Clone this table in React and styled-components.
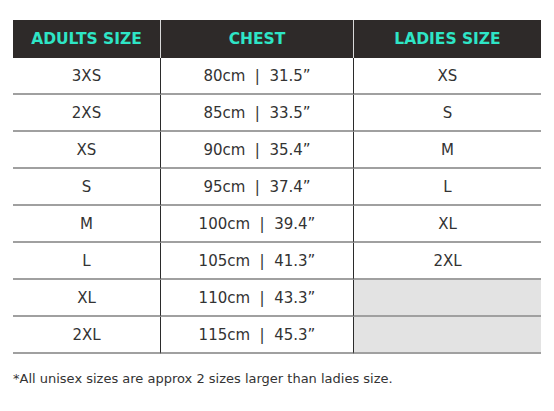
import React from "react";
import styled, { createGlobalStyle } from "styled-components";

const Global = createGlobalStyle`
  html, body { margin: 0; padding: 0; background: #ffffff; }
  body { font-family: "DejaVu Sans", "Liberation Sans", sans-serif; }
`;

const Page = styled.div`
  width: 554px;
  height: 411px;
  padding: 20px 13px 0 13px;
  box-sizing: border-box;
  display: flex;
  flex-direction: column;
`;

const Table = styled.div`
  display: grid;
  grid-template-columns: 147px 193px 188px;
  width: 528px;
`;

const HeadCell = styled.div`
  height: 38px;
  background: #2e2a29;
  color: #2ee5c6;
  font-weight: 700;
  font-size: 15.5px;
  display: flex;
  align-items: center;
  justify-content: center;
  box-sizing: border-box;
  border-left: ${(p) => (p.$first ? "none" : "1px solid #d9d9d9")};
`;

const Cell = styled.div`
  height: 37px;
  box-sizing: border-box;
  display: flex;
  align-items: center;
  justify-content: center;
  color: #333333;
  font-size: 15px;
  border-bottom: 2px solid #a0a0a0;
  border-left: ${(p) => (p.$first ? "none" : "1px solid #2b2b2b")};
  background: ${(p) => (p.$empty ? "#e3e3e3" : "#ffffff")};
  white-space: pre;
`;

const Note = styled.div`
  margin-top: 17px;
  font-size: 13px;
  color: #333333;
`;

const rows = [
  ["3XS", "80cm  |  31.5\u201D", "XS"],
  ["2XS", "85cm  |  33.5\u201D", "S"],
  ["XS", "90cm  |  35.4\u201D", "M"],
  ["S", "95cm  |  37.4\u201D", "L"],
  ["M", "100cm  |  39.4\u201D", "XL"],
  ["L", "105cm  |  41.3\u201D", "2XL"],
  ["XL", "110cm  |  43.3\u201D", ""],
  ["2XL", "115cm  |  45.3\u201D", ""],
];

export default function App() {
  return (
    <Page>
      <Global />
      <Table>
        <HeadCell $first>ADULTS SIZE</HeadCell>
        <HeadCell>CHEST</HeadCell>
        <HeadCell>LADIES SIZE</HeadCell>
        {rows.map((r, i) => (
          <React.Fragment key={i}>
            <Cell $first>{r[0]}</Cell>
            <Cell>{r[1]}</Cell>
            <Cell $empty={!r[2]}>{r[2]}</Cell>
          </React.Fragment>
        ))}
      </Table>
      <Note>*All unisex sizes are approx 2 sizes larger than ladies size.</Note>
    </Page>
  );
}
